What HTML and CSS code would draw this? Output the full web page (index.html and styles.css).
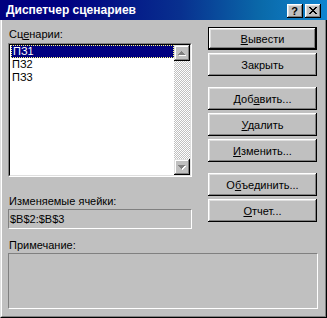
FILE: index.html
```html
<!DOCTYPE html>
<html lang="ru">
<head>
<meta charset="utf-8">
<title>Диспетчер сценариев</title>
<link rel="stylesheet" href="styles.css">
</head>
<body>
<div class="window">
  <div class="titlebar">
    <span class="title">Диспетчер сценариев</span>
    <div class="tbtns">
      <div class="tbtn help">?</div>
      <div class="tbtn close">
        <svg width="8" height="7" viewBox="0 0 8 7" shape-rendering="crispEdges">
          <path fill="#000" d="M0 0h2v1h-2zM6 0h2v1h-2zM1 1h2v1h-2zM5 1h2v1h-2zM2 2h4v1h-4zM3 3h2v1h-2zM2 4h4v1h-4zM1 5h2v1h-2zM5 5h2v1h-2zM0 6h2v1h-2zM6 6h2v1h-2z"/>
        </svg>
      </div>
    </div>
  </div>
  <div class="frame">
    <div class="frame-in">
      <div class="top">
        <div class="leftcol">
          <div class="label first">Сц<u>е</u>нарии:</div>
          <div class="listbox">
            <div class="listbox-in">
              <div class="items">
                <div class="item sel">ПЗ1</div>
                <div class="item">ПЗ2</div>
                <div class="item">ПЗ3</div>
              </div>
              <div class="vscroll">
                <div class="sbtn">
                  <svg width="8" height="5" viewBox="0 0 8 5" shape-rendering="crispEdges">
                    <path fill="#fff" transform="translate(1 1)" d="M3 0h1v1h1v1h1v1h1v1H0V3h1V2h1V1h1z"/>
                    <path fill="#808080" d="M3 0h1v1h1v1h1v1h1v1H0V3h1V2h1V1h1z"/>
                  </svg>
                </div>
                <div class="track"></div>
                <div class="sbtn">
                  <svg width="8" height="5" viewBox="0 0 8 5" shape-rendering="crispEdges">
                    <path fill="#fff" transform="translate(1 1)" d="M0 0h7v1h-1v1h-1v1h-1v1h-1v-1h-1v-1h-1v-1h-1z"/>
                    <path fill="#808080" d="M0 0h7v1h-1v1h-1v1h-1v1h-1v-1h-1v-1h-1v-1h-1z"/>
                  </svg>
                </div>
              </div>
            </div>
          </div>
          <div class="label cells">Изменяемые ячейки:</div>
          <div class="field">$B$2:$B$3</div>
        </div>
        <div class="rightcol">
          <div class="btn default"><span><u>В</u>ывести</span></div>
          <div class="btn">Закрыть</div>
          <div class="btn group">Доб<u>а</u>вить...</div>
          <div class="btn"><span><u>У</u>далить</span></div>
          <div class="btn"><span><u>И</u>зменить...</span></div>
          <div class="btn group">О<u>б</u>ъединить...</div>
          <div class="btn"><span><u>О</u>тчет...</span></div>
        </div>
      </div>
      <div class="label note-label">Примечание:</div>
      <div class="notes"></div>
    </div>
  </div>
</div>
</body>
</html>
```

FILE: styles.css
```css
html, body {
  margin: 0;
  padding: 0;
  background: #c0c0c0;
}

body {
  font-family: "Liberation Sans", Arial, sans-serif;
  font-size: 11px;
  color: #000;
}

.window {
  width: 327px;
  height: 318px;
  display: flex;
  flex-direction: column;
  background: #c0c0c0;
}

.titlebar {
  height: 20px;
  flex: none;
  display: flex;
  align-items: flex-start;
  background: linear-gradient(to right, #000080 0%, #000080 20%, #08308f 55%, #0a6aaa 80%, #1084d0 100%);
  color: #fff;
}

.title {
  flex: 1;
  font-weight: bold;
  font-size: 12px;
  line-height: 20px;
  padding-left: 6px;
  white-space: nowrap;
}

.tbtns {
  display: flex;
  gap: 2px;
  margin-top: 4px;
  margin-right: 6px;
}

.tbtn {
  width: 16px;
  height: 14px;
  box-sizing: border-box;
  background: #c0c0c0;
  box-shadow: inset -1px -1px #000, inset 1px 1px #fff, inset -2px -2px #808080, inset 2px 2px #dfdfdf;
  display: flex;
  align-items: center;
  justify-content: center;
  color: #000;
}

.help {
  font-weight: bold;
  font-size: 11px;
  line-height: 14px;
  padding-right: 1px;
}

.close svg {
  display: block;
  margin-top: -1px;
}

.frame {
  flex: 1;
  box-sizing: border-box;
  border-left: 1px solid #dfdfdf;
  border-right: 1px solid #000;
  border-bottom: 1px solid #000;
  display: flex;
  flex-direction: column;
}

.frame-in {
  flex: 1;
  box-sizing: border-box;
  border-left: 1px solid #fff;
  border-right: 1px solid #808080;
  border-bottom: 1px solid #808080;
  padding: 7px 7px 0 6px;
  display: flex;
  flex-direction: column;
}

.top {
  display: grid;
  grid-template-columns: 184px 110px;
  column-gap: 16px;
  align-items: start;
}

.leftcol {
  display: flex;
  flex-direction: column;
}

.label {
  height: 13px;
  line-height: 13px;
  padding-left: 1px;
  white-space: nowrap;
}

.label.first {
  margin-top: 1px;
}

.label.cells {
  margin-top: 18px;
}

.label.note-label {
  margin-top: 10px;
}

.listbox {
  margin-top: 2px;
  height: 134px;
  box-sizing: border-box;
  border: 1px solid;
  border-color: #808080 #fff #fff #808080;
}

.listbox-in {
  height: 100%;
  box-sizing: border-box;
  border: 1px solid;
  border-color: #000 #dfdfdf #dfdfdf #000;
  background: #fff;
  display: flex;
}

.items {
  flex: 1;
  display: flex;
  flex-direction: column;
}

.item {
  height: 13px;
  line-height: 13px;
  padding-left: 2px;
  white-space: nowrap;
}

.item.sel {
  background: #000080;
  color: #fff;
  box-sizing: border-box;
  border: 1px dotted #ffff80;
  padding-left: 1px;
  line-height: 11px;
  margin-left: 1px;
}

.vscroll {
  width: 16px;
  flex: none;
  display: flex;
  flex-direction: column;
}

.sbtn {
  width: 16px;
  height: 16px;
  flex: none;
  box-sizing: border-box;
  background: #c0c0c0;
  box-shadow: inset -1px -1px #000, inset 1px 1px #dfdfdf, inset -2px -2px #808080, inset 2px 2px #fff;
  display: flex;
  align-items: center;
  justify-content: center;
}

.sbtn svg {
  display: block;
}

.track {
  flex: 1;
  background-color: #c0c0c0;
  background-image: repeating-conic-gradient(#fff 0 25%, #c0c0c0 0 50%);
  background-size: 2px 2px;
}

.field {
  margin-top: 1px;
  height: 20px;
  box-sizing: border-box;
  border: 1px solid;
  border-color: #808080 #fff #fff #808080;
  line-height: 18px;
  padding-left: 1px;
  white-space: nowrap;
}

.rightcol {
  display: flex;
  flex-direction: column;
  gap: 3px;
}

.btn {
  width: 109px;
  height: 23px;
  box-sizing: border-box;
  background: #c0c0c0;
  box-shadow: inset -1px -1px #000, inset 1px 1px #fff, inset -2px -2px #808080, inset 2px 2px #dfdfdf;
  display: flex;
  align-items: center;
  justify-content: center;
  white-space: nowrap;
}

.btn.default {
  border: 1px solid #000;
}

.btn.group {
  margin-top: 8px;
}

.notes {
  margin-top: 1px;
  height: 56px;
  box-sizing: border-box;
  border: 1px solid;
  border-color: #808080 #fff #fff #808080;
}
```
